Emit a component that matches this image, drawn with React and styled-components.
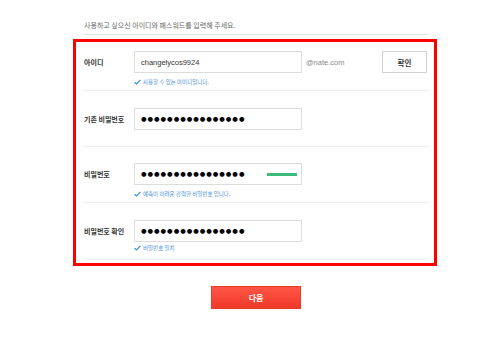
import React from 'react'
import styled, { createGlobalStyle } from 'styled-components'

const GlobalStyle = createGlobalStyle`
  html, body {
    margin: 0;
    padding: 0;
    background: #fff;
    font-family: "Noto Sans CJK KR", "Liberation Sans", sans-serif;
  }
`

const Page = styled.div`
  width: 364px;
  margin-left: 73px;
  padding-top: 19px;
`

const Intro = styled.p`
  margin: 0 9px 0 11px;
  padding-bottom: 3px;
  border-bottom: 1px solid #e4e4e4;
  font-size: 7px;
  line-height: 12px;
  color: #666;
`

const Form = styled.div`
  margin-top: 4px;
  border: 3px solid #ff0000;
  padding: 0 6px 3px 8px;
`

const Row = styled.div`
  padding: ${p => p.$pad};
  border-bottom: 1px solid #ececec;
`

const Line = styled.div`
  display: flex;
  align-items: center;
  height: 22px;
`

const Label = styled.div`
  width: 50px;
  flex-shrink: 0;
  font-size: 7px;
  font-weight: 700;
  color: #333;
`

const Field = styled.div`
  box-sizing: border-box;
  width: 168px;
  height: 22px;
  border: 1px solid #dcdcdc;
  display: flex;
  align-items: center;
  padding-left: 6px;
  padding-right: 4px;
`

const TextValue = styled.span`
  font-family: "Liberation Sans", Arial, sans-serif;
  font-size: 7.5px;
  color: #333;
`

const Dots = styled.span`
  font-family: "DejaVu Sans", sans-serif;
  font-size: 6.4px;
  letter-spacing: 0.95px;
  color: #000;
  line-height: 1;
`

const Strength = styled.span`
  margin-left: auto;
  width: 30px;
  height: 3px;
  background: #3dbb7b;
`

const Domain = styled.span`
  margin-left: 4px;
  font-family: "Liberation Sans", Arial, sans-serif;
  font-size: 7.5px;
  color: #8a8a8a;
`

const SmallButton = styled.button`
  margin-left: auto;
  margin-right: 1px;
  box-sizing: border-box;
  width: 45px;
  height: 22px;
  background: #fff;
  border: 1px solid #d2d2d2;
  font-family: "Noto Sans CJK KR", sans-serif;
  font-size: 7.5px;
  font-weight: 700;
  color: #333;
  padding: 0;
`

const Hint = styled.div`
  display: flex;
  align-items: center;
  gap: 2px;
  margin-top: ${p => p.$gap};
  margin-left: 50px;
  height: 8px;
  font-size: 5.5px;
  color: #4a8fd8;
`

const Footer = styled.div`
  display: flex;
  justify-content: center;
  padding-left: 2px;
  margin-top: 20px;
`

const NextButton = styled.button`
  box-sizing: border-box;
  width: 90px;
  height: 23px;
  border: 1px solid #ee3a2a;
  background: linear-gradient(#ff5646, #f03828);
  color: #fff;
  font-family: "Noto Sans CJK KR", sans-serif;
  font-size: 8px;
  font-weight: 700;
  padding: 0;
`

const Check = () => (
  <svg width="7" height="6" viewBox="0 0 7 6">
    <path d="M0.6 3.2 L2.5 5 L6.4 0.8" fill="none" stroke="#3a8ee6" strokeWidth="1.2" />
  </svg>
)

const mask = '●'.repeat(16)

export default function App() {
  return (
    <>
      <GlobalStyle />
      <Page>
        <Intro>사용하고 싶으신 아이디와 패스워드를 입력해 주세요.</Intro>
        <Form>
          <Row $pad="9px 0 4px">
            <Line>
              <Label>아이디</Label>
              <Field>
                <TextValue>changelycos9924</TextValue>
              </Field>
              <Domain>@nate.com</Domain>
              <SmallButton>확인</SmallButton>
            </Line>
            <Hint $gap="5px"><Check />사용할 수 있는 아이디입니다.</Hint>
          </Row>
          <Row $pad="17px 0 16px">
            <Line>
              <Label>기존 비밀번호</Label>
              <Field><Dots>{mask}</Dots></Field>
            </Line>
          </Row>
          <Row $pad="16px 0 4px">
            <Line>
              <Label>비밀번호</Label>
              <Field>
                <Dots>{mask}</Dots>
                <Strength />
              </Field>
            </Line>
            <Hint $gap="5px"><Check />예측이 어려운 강력한 비밀번호 입니다.</Hint>
          </Row>
          <Row $pad="17px 0 7px">
            <Line>
              <Label>비밀번호 확인</Label>
              <Field><Dots>{mask}</Dots></Field>
            </Line>
            <Hint $gap="2px"><Check />비밀번호 일치</Hint>
          </Row>
        </Form>
        <Footer>
          <NextButton>다음</NextButton>
        </Footer>
      </Page>
    </>
  )
}
